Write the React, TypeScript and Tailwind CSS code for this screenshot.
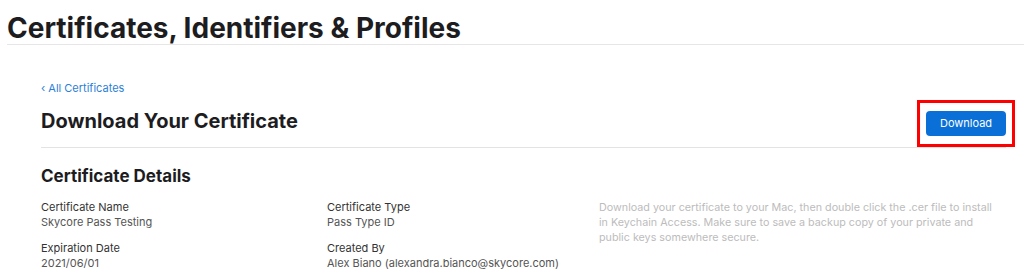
export default function App() {
  return (
    <div
      className="w-[1024px] h-[280px] bg-white overflow-hidden text-[#1d1d1f]"
      style={{ fontFamily: 'Inter, "Liberation Sans", sans-serif' }}
    >
      {/* page header */}
      <div className="pl-[7px] pt-[12px]">
        <h1 className="text-[28px] leading-[32px] font-bold">
          Certificates, Identifiers &amp; Profiles
        </h1>
        <div className="h-px bg-[#e6e6e6]" />
      </div>

      <div className="ml-[41px] mr-[18px] mt-[36px]">
        <a href="#" className="block text-[11px] leading-[14px] text-[#2c7fd6]">
          ‹ All Certificates
        </a>

        <div className="mt-[5px] flex items-start justify-between">
          <h2 className="mt-[8px] text-[20px] leading-[26px] font-bold">Download Your Certificate</h2>
          <div className="border-[3px] border-[#ff0000] px-[6px] py-[8px] -mr-[9px]">
            <button className="block w-[80px] h-[25px] rounded-[4px] bg-[#0a6fd6] text-white text-[11px]">
              Download
            </button>
          </div>
        </div>

        <div className="h-px bg-[#e3e3e3]" />

        <h3 className="mt-[17px] text-[17px] leading-[22px] font-bold">Certificate Details</h3>

        <div className="mt-[13px] flex text-[11px] leading-[15px]">
          <div className="w-[286px] flex flex-col gap-[11px]">
            <div>
              <div className="text-[#333]">Certificate Name</div>
              <div className="text-[#555]">Skycore Pass Testing</div>
            </div>
            <div>
              <div className="text-[#333]">Expiration Date</div>
              <div className="text-[#555]">2021/06/01</div>
            </div>
          </div>
          <div className="w-[272px] flex flex-col gap-[11px]">
            <div>
              <div className="text-[#333]">Certificate Type</div>
              <div className="text-[#555]">Pass Type ID</div>
            </div>
            <div>
              <div className="text-[#333]">Created By</div>
              <div className="text-[#555]">Alex Biano (alexandra.bianco@skycore.com)</div>
            </div>
          </div>
          <p className="w-[401px] text-[10.75px] text-[#bcbcbc]">
            Download your certificate to your Mac, then double click the .cer file to install in
            Keychain Access. Make sure to save a backup copy of your private and public keys
            somewhere secure.
          </p>
        </div>
      </div>
    </div>
  );
}
